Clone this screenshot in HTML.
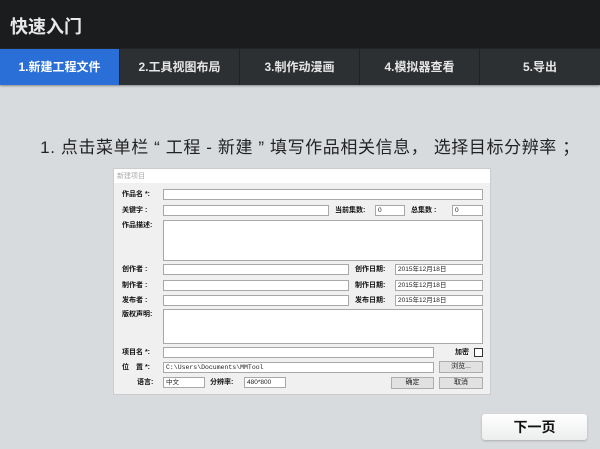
<!DOCTYPE html>
<html><head><meta charset="utf-8"><style>
*{margin:0;padding:0;box-sizing:border-box}
body{width:600px;height:449px;overflow:hidden;background:#d8dbde;font-family:"Liberation Sans","Noto Sans CJK SC",sans-serif;position:relative}
.hd{position:absolute;left:0;top:0;width:600px;height:49px;background:#1b1c1e;color:#e8e8e8;font-size:18px;font-weight:bold;padding:13px 0 0 10px}
.nav{position:absolute;left:0;top:49px;width:600px;height:36px;background:#2d3033;display:flex;box-shadow:0 1px 2px #888}
.nav div{width:120px;height:36px;line-height:36px;text-align:center;color:#e6e6e6;font-size:12px;font-weight:bold;border-right:1px solid #202224}
.nav .on{background:#2a6fd8;color:#fff}
h1{position:absolute;left:10px;width:600px;top:133px;text-align:center;font-size:17px;font-weight:normal;color:#222;letter-spacing:0.6px}
.dlg{position:absolute;left:113px;top:168px;width:378px;height:227px;background:#f0f0f0;border:1px solid #ccc}
.tb{position:absolute;left:0;top:0;width:100%;height:14px;background:#fff;font-size:7px;color:#aaa;padding:2px 3px}
.a{position:absolute;font-size:7px;color:#111;line-height:11px;white-space:nowrap;font-weight:bold}
.i{position:absolute;background:#fff;border:1px solid #a8a8a8;height:11px;font-size:6.5px;line-height:9px;padding-left:2px;color:#222}
.b{position:absolute;background:#e1e1e1;border:1px solid #adadad;height:12px;font-size:7px;text-align:center;line-height:10px;color:#222}
.nx{position:absolute;left:482px;top:414px;width:105px;height:26px;background:linear-gradient(#fff,#eceded);border-radius:3px;font-size:14px;font-weight:bold;text-align:center;line-height:26px;color:#111;box-shadow:0 1px 2px #aaa}
</style></head><body>
<div class="hd">快速入门</div>
<div class="nav"><div class="on">1.新建工程文件</div><div>2.工具视图布局</div><div>3.制作动漫画</div><div>4.模拟器查看</div><div style="border:none">5.导出</div></div>
<h1>1. 点击菜单栏 “ 工程 - 新建 ” 填写作品相关信息， 选择目标分辨率 ；</h1>
<div class="dlg">
<div class="tb">新建项目</div>
</div>
<div style="position:absolute;left:0;top:0">
<div class="a" style="left:122px;top:189px">作品名 *:</div><div class="i" style="left:163px;top:189px;width:320px"></div>
<div class="a" style="left:122px;top:205px">关键字 :</div><div class="i" style="left:163px;top:205px;width:166px"></div>
<div class="a" style="left:335px;top:205px">当前集数:</div><div class="i" style="left:375px;top:205px;width:30px">0</div>
<div class="a" style="left:411px;top:205px">总集数 :</div><div class="i" style="left:452px;top:205px;width:31px">0</div>
<div class="a" style="left:122px;top:220px">作品描述:</div><div class="i" style="left:163px;top:220px;width:320px;height:41px"></div>
<div class="a" style="left:122px;top:264px">创作者 :</div><div class="i" style="left:163px;top:264px;width:186px"></div>
<div class="a" style="left:355px;top:264px">创作日期:</div><div class="i" style="left:395px;top:264px;width:88px">2015年12月18日</div>
<div class="a" style="left:122px;top:280px">制作者 :</div><div class="i" style="left:163px;top:280px;width:186px"></div>
<div class="a" style="left:355px;top:280px">制作日期:</div><div class="i" style="left:395px;top:280px;width:88px">2015年12月18日</div>
<div class="a" style="left:122px;top:295px">发布者 :</div><div class="i" style="left:163px;top:295px;width:186px"></div>
<div class="a" style="left:355px;top:295px">发布日期:</div><div class="i" style="left:395px;top:295px;width:88px">2015年12月18日</div>
<div class="a" style="left:122px;top:309px">版权声明:</div><div class="i" style="left:163px;top:309px;width:320px;height:35px"></div>
<div class="a" style="left:122px;top:347px">项目名 *:</div><div class="i" style="left:163px;top:347px;width:271px"></div>
<div class="a" style="left:455px;top:347px">加密</div><div class="i" style="left:474px;top:348px;width:9px;height:9px;border-color:#333"></div>
<div class="a" style="left:122px;top:362px">位　置 *:</div><div class="i" style="left:163px;top:362px;width:271px;font-family:'Liberation Mono',monospace">C:\Users\Documents\MMTool</div>
<div class="b" style="left:439px;top:361px;width:44px">浏览...</div>
<div class="a" style="left:137px;top:377px">语言:</div><div class="i" style="left:163px;top:377px;width:42px">中文</div>
<div class="a" style="left:210px;top:377px">分辨率:</div><div class="i" style="left:244px;top:377px;width:42px">480*800</div>
<div class="b" style="left:391px;top:377px;width:43px">确定</div><div class="b" style="left:439px;top:377px;width:44px">取消</div>
</div>
<div class="nx">下一页</div>
</body></html>
